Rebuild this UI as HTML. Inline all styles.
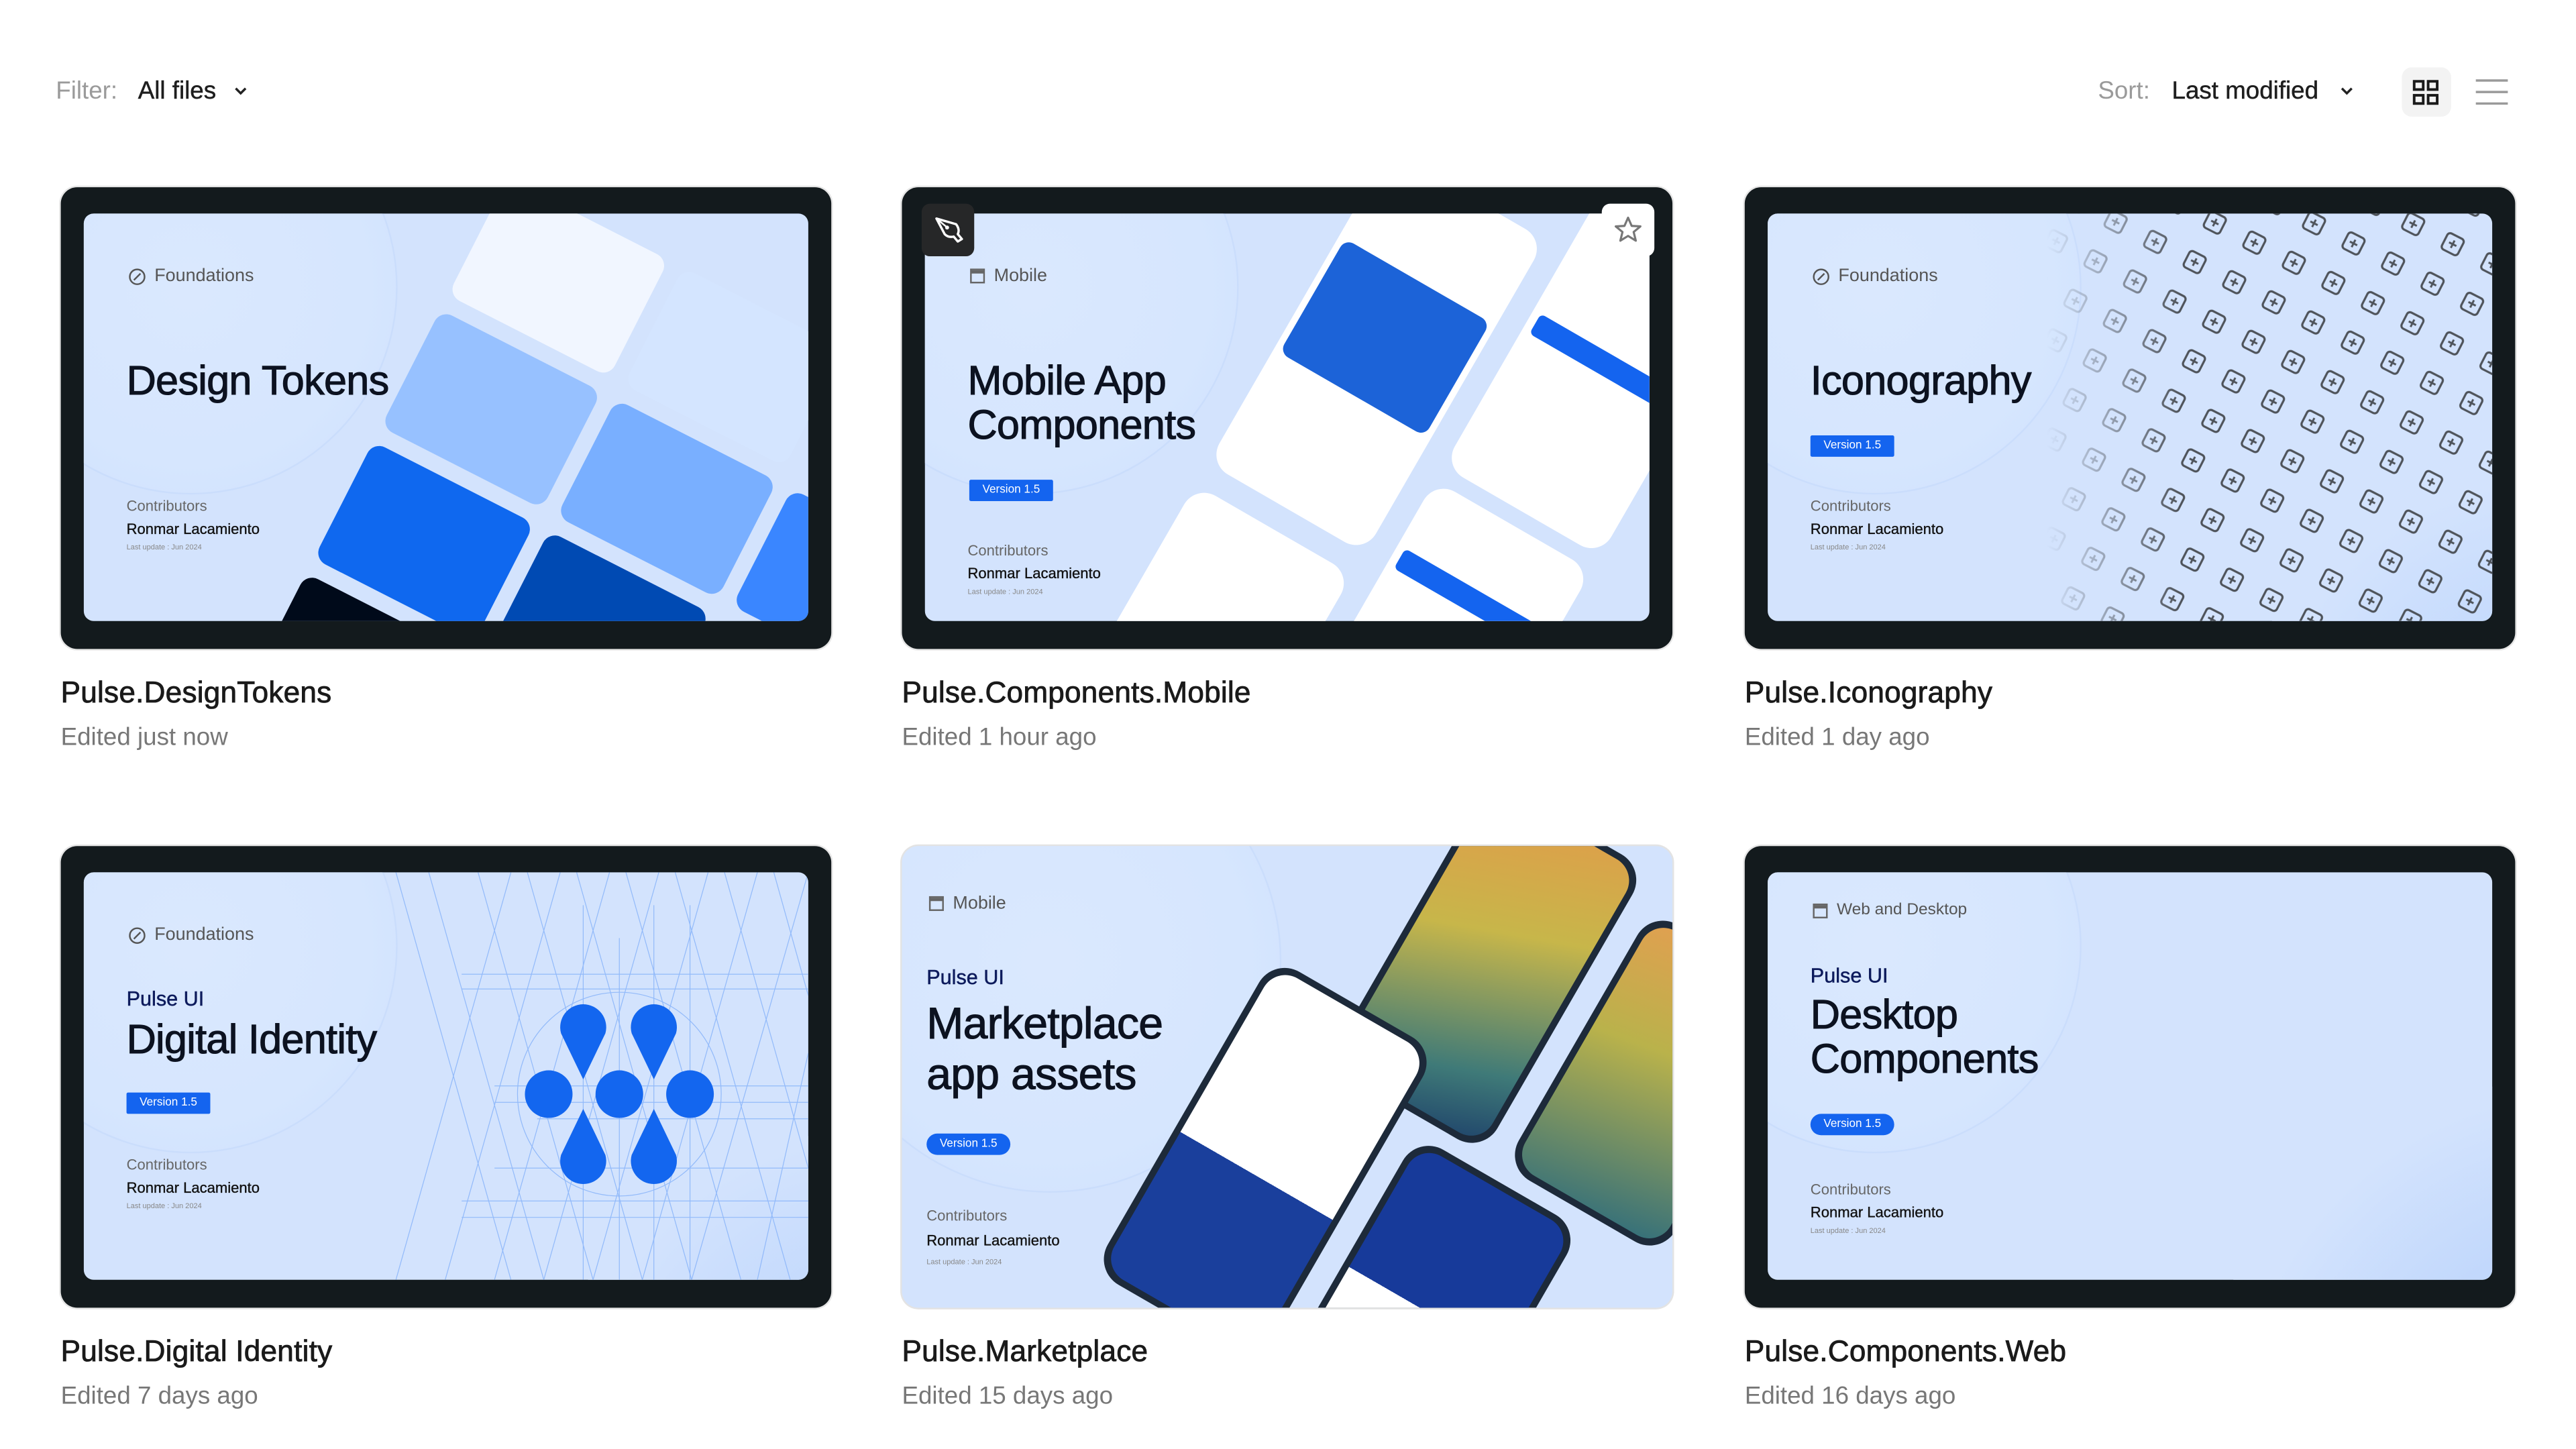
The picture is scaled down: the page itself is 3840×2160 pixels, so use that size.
<!DOCTYPE html>
<html><head><meta charset="utf-8">
<style>
*{margin:0;padding:0;box-sizing:border-box}
html,body{width:3840px;height:2160px;overflow:hidden;background:#fff}
body{font-family:"Liberation Sans",sans-serif}
#w{position:absolute;left:0;top:0;width:1568px;height:881px;overflow:hidden;transform:scale(2.44898);transform-origin:0 0}
.a{position:absolute}
.card{position:absolute;width:469px;height:281px;border-radius:10px;background:#131a1d;overflow:hidden;box-shadow:0 0 0 1px #e6e6e6}
.in{position:absolute;left:14px;top:16px;width:441px;height:248px;border-radius:6px;overflow:hidden;background:#d3e3fd}
.glow{position:absolute;left:-60px;top:-80px;width:250px;height:250px;border-radius:50%;background:radial-gradient(circle,#dae8fe 0%,#d6e6fe 60%,rgba(205,224,253,.9) 100%);box-shadow:0 0 0 1px rgba(190,212,250,.4)}
.lab{position:absolute;font-size:11px;color:#555;display:flex;align-items:center;gap:5px;transform:translateY(-50%)}
.t{position:absolute;font-size:25px;color:#0c1220;line-height:27px;letter-spacing:-.3px;-webkit-text-stroke:.45px #0c1220}
.pu{position:absolute;font-size:12.5px;color:#0d1b5c;transform:translateY(-50%);-webkit-text-stroke:.2px #0d1b5c}
.ver{position:absolute;background:#1464ef;color:#fff;font-size:7px;height:13px;line-height:13px;padding:0 8px;border-radius:1px}
.c1{position:absolute;font-size:9px;color:#666;transform:translateY(-50%)}
.c2{position:absolute;font-size:9px;color:#111;transform:translateY(-50%);-webkit-text-stroke:.15px #111}
.c3{position:absolute;font-size:4.5px;color:#888;transform:translateY(-50%)}
.nm{position:absolute;font-size:18px;color:#1a1a1a;transform:translateY(-50%);letter-spacing:.1px;-webkit-text-stroke:.35px #1a1a1a}
.ed{position:absolute;font-size:15px;color:#777;transform:translateY(-50%)}
.tile{position:absolute;border-radius:8px}
.ph{position:absolute;background:#fff;border-radius:14px}
</style></head><body><div id="w">

<div class="a" style="left:34px;top:47px;font-size:15px;color:#9a9a9a">Filter:</div>
<div class="a" style="left:84px;top:47px;font-size:15px;color:#1e1e1e;-webkit-text-stroke:.2px #1e1e1e">All files</div>
<svg class="a" style="left:142px;top:52px" width="9" height="7" viewBox="0 0 9 7"><path d="M1.5 1.8 4.5 4.8 7.5 1.8" fill="none" stroke="#222" stroke-width="1.4"/></svg>
<div class="a" style="left:1277px;top:47px;font-size:15px;color:#9a9a9a">Sort:</div>
<div class="a" style="left:1322px;top:47px;font-size:15px;color:#1e1e1e;-webkit-text-stroke:.2px #1e1e1e">Last modified</div>
<svg class="a" style="left:1424px;top:52px" width="9" height="7" viewBox="0 0 9 7"><path d="M1.5 1.8 4.5 4.8 7.5 1.8" fill="none" stroke="#222" stroke-width="1.4"/></svg>
<div class="a" style="left:1462px;top:41px;width:30px;height:30px;border-radius:6px;background:#f3f3f3"></div>
<svg class="a" style="left:1468px;top:48px" width="18" height="17" viewBox="0 0 18 17"><g fill="none" stroke="#1a1a1a" stroke-width="1.6"><rect x="1.5" y="1.5" width="5.5" height="5"/><rect x="10" y="1.5" width="5.5" height="5"/><rect x="1.5" y="10" width="5.5" height="5"/><rect x="10" y="10" width="5.5" height="5"/></g></svg>
<svg class="a" style="left:1507px;top:47px" width="20" height="18" viewBox="0 0 20 18"><g stroke="#9a9a9a" stroke-width="1.4"><path d="M0 2h19.5M0 9h19.5M0 16h19.5"/></g></svg>

<!-- CARD 1 -->
<div class="card" style="left:37px;top:114px"><div class="in">
 <div class="glow"></div>
 <div class="a" style="left:200px;top:-40px;width:400px;height:400px;transform:rotate(27deg);transform-origin:0 0">
  <div class="tile" style="left:60px;top:-10px;width:110px;height:80px;background:#f1f6ff"></div>
  <div class="tile" style="left:180px;top:-10px;width:110px;height:80px;background:#d4e5ff"></div>
  <div class="tile" style="left:60px;top:80px;width:110px;height:80px;background:#97c1ff"></div>
  <div class="tile" style="left:180px;top:80px;width:110px;height:80px;background:#79afff"></div>
  <div class="tile" style="left:60px;top:170px;width:110px;height:80px;background:#0f68ef"></div>
  <div class="tile" style="left:180px;top:170px;width:110px;height:80px;background:#004ab3"></div>
  <div class="tile" style="left:60px;top:260px;width:110px;height:80px;background:#000a1a"></div>
  <div class="tile" style="left:180px;top:260px;width:110px;height:80px;background:#0f1e5c"></div>
  <div class="tile" style="left:300px;top:80px;width:110px;height:80px;background:#3a86ff"></div>
 </div>
 <div class="lab" style="left:27px;top:38px"><svg width="11" height="11" viewBox="0 0 11 11"><circle cx="5.5" cy="5.5" r="4.5" fill="none" stroke="#555" stroke-width="1"/><path d="M7.5 3.5 4.8 6.2 3.5 7.5" stroke="#555" stroke-width="1"/></svg>Foundations</div>
 <div class="t" style="left:26px;top:89px">Design Tokens</div>
 <div class="c1" style="left:26px;top:178px">Contributors</div>
 <div class="c2" style="left:26px;top:192px">Ronmar Lacamiento</div>
 <div class="c3" style="left:26px;top:203px">Last update : Jun 2024</div>
</div></div>
<div class="nm" style="left:37px;top:422px">Pulse.DesignTokens</div>
<div class="ed" style="left:37px;top:449px">Edited just now</div>

<!-- CARD 2 -->
<div class="card" style="left:549px;top:114px"><div class="in">
 <div class="glow"></div>
 <div class="a" style="left:260px;top:-40px;width:400px;height:400px;transform:rotate(30deg);transform-origin:0 0">
  <div class="ph" style="left:20px;top:-10px;width:110px;height:220px"></div>
  <div class="a" style="left:24px;top:50px;width:102px;height:80px;background:#1c63d8;border-radius:6px"></div>
  <div class="ph" style="left:145px;top:-60px;width:110px;height:200px"></div>
  <div class="ph" style="left:145px;top:150px;width:110px;height:200px"></div>
  <div class="a" style="left:150px;top:195px;width:100px;height:14px;background:#1464ef;border-radius:3px"></div>
  <div class="a" style="left:150px;top:30px;width:100px;height:14px;background:#1464ef;border-radius:3px"></div>
  <div class="ph" style="left:20px;top:225px;width:110px;height:200px"></div>
 </div>
 <div class="lab" style="left:27px;top:38px"><svg width="10" height="10" viewBox="0 0 10 10"><rect x="1" y="1" width="8" height="8" fill="none" stroke="#666" stroke-width="1"/><path d="M1 2.5h8" stroke="#666" stroke-width="2"/></svg>Mobile</div>
 <div class="t" style="left:26px;top:89px">Mobile App<br>Components</div>
 <div class="ver" style="left:27px;top:162px">Version 1.5</div>
 <div class="c1" style="left:26px;top:205px">Contributors</div>
 <div class="c2" style="left:26px;top:219px">Ronmar Lacamiento</div>
 <div class="c3" style="left:26px;top:230px">Last update : Jun 2024</div>
</div>
 <div class="a" style="left:12px;top:10px;width:32px;height:32px;border-radius:5px;background:#262728"></div>
 <svg class="a" style="left:16px;top:14px" width="24" height="24" viewBox="0 0 24 24"><path d="M5 5 17 8.5c1.5 2 2 4 1 6l2.5 3-2.5 1.5-2.5-3c-2 .5-4 0-5.5-1.5Z" fill="none" stroke="#fff" stroke-width="1.4" stroke-linejoin="round"/><circle cx="11.5" cy="10.5" r="1.2" fill="#fff"/><path d="M5 5 11 10" stroke="#fff" stroke-width="1"/></svg>
 <div class="a" style="left:426px;top:10px;width:32px;height:32px;border-radius:5px;background:#fff"></div>
 <svg class="a" style="left:432px;top:16px" width="20" height="20" viewBox="0 0 20 20"><path d="M10 2.5 12.2 7.5 17.5 7.8 13.4 11.2 14.7 16.5 10 13.6 5.3 16.5 6.6 11.2 2.5 7.8 7.8 7.5Z" fill="none" stroke="#777" stroke-width="1.3" stroke-linejoin="round"/></svg>
</div>
<div class="nm" style="left:549px;top:422px">Pulse.Components.Mobile</div>
<div class="ed" style="left:549px;top:449px">Edited 1 hour ago</div>

<!-- CARD 3 -->
<div class="card" style="left:1062px;top:114px"><div class="in">
 <div class="glow"></div>
 <div class="a" style="left:300px;top:160px;width:260px;height:260px;border-radius:50%;background:radial-gradient(circle at 70% 70%,#b6d1fc,#d3e3fd 70%)"></div>
 <svg class="a" style="left:170px;top:0" width="271" height="248"><defs><pattern id="ic" width="27" height="27" patternUnits="userSpaceOnUse" patternTransform="rotate(27)"><rect x="7" y="7" width="11" height="11" rx="2" fill="none" stroke="#4e535a" stroke-width="1.3"/><path d="M10 12.5h5M12.5 10v5" stroke="#4e535a" stroke-width="1.2"/></pattern>
 <linearGradient id="fd" x1="0" x2="1"><stop offset="0" stop-color="#fff" stop-opacity="0"/><stop offset=".3" stop-color="#fff" stop-opacity="1"/></linearGradient><mask id="mk"><rect width="271" height="248" fill="url(#fd)"/></mask></defs>
 <rect x="0" y="0" width="271" height="248" fill="url(#ic)" mask="url(#mk)"/></svg>
 <div class="lab" style="left:27px;top:38px"><svg width="11" height="11" viewBox="0 0 11 11"><circle cx="5.5" cy="5.5" r="4.5" fill="none" stroke="#555" stroke-width="1"/><path d="M7.5 3.5 4.8 6.2 3.5 7.5" stroke="#555" stroke-width="1"/></svg>Foundations</div>
 <div class="t" style="left:26px;top:89px">Iconography</div>
 <div class="ver" style="left:26px;top:135px">Version 1.5</div>
 <div class="c1" style="left:26px;top:178px">Contributors</div>
 <div class="c2" style="left:26px;top:192px">Ronmar Lacamiento</div>
 <div class="c3" style="left:26px;top:203px">Last update : Jun 2024</div>
</div></div>
<div class="nm" style="left:1062px;top:422px">Pulse.Iconography</div>
<div class="ed" style="left:1062px;top:449px">Edited 1 day ago</div>

<!-- CARD 4 -->
<div class="card" style="left:37px;top:515px"><div class="in">
 <div class="glow"></div>
 <div class="a" style="left:300px;top:160px;width:260px;height:260px;border-radius:50%;background:radial-gradient(circle at 70% 70%,#b3cffc,#d3e3fd 70%)"></div>
 <svg class="a" style="left:0;top:0" width="441" height="248"><g stroke="#8cb6fa" stroke-width=".5" fill="none" opacity=".9">
  <path d="M190 0 260 248M210 0 280 248M240 0 310 248M270 0 340 248M300 0 370 248M330 0 400 248M360 0 430 248M390 0 441 180M420 0 441 75"/>
  <path d="M260 0 190 248M290 0 220 248M320 0 250 248M350 0 280 248M380 0 310 248M410 0 340 248M441 0 370 248M441 110 410 248"/>
  <path d="M230 62H441M230 71H441M250 130H441M250 140H441M250 180H441M230 200H441M230 210H441M276 150H441"/>
  <path d="M326 40V248M347 20V248M304 20V248M369 20V248"/>
  <circle cx="326" cy="135" r="62"/></g>
  <g fill="#1366ef"><circle cx="283" cy="135" r="14.5"/><circle cx="326" cy="135" r="14.5"/><circle cx="369" cy="135" r="14.5"/>
  <path d="M304 126 290.5 98A14 14 0 1 1 317.5 98Z"/><path d="M347 126 333.5 98A14 14 0 1 1 360.5 98Z"/>
  <path d="M304 144 290.5 172A14 14 0 1 0 317.5 172Z"/><path d="M347 144 333.5 172A14 14 0 1 0 360.5 172Z"/></g></svg>
 <div class="lab" style="left:27px;top:38px"><svg width="11" height="11" viewBox="0 0 11 11"><circle cx="5.5" cy="5.5" r="4.5" fill="none" stroke="#555" stroke-width="1"/><path d="M7.5 3.5 4.8 6.2 3.5 7.5" stroke="#555" stroke-width="1"/></svg>Foundations</div>
 <div class="pu" style="left:26px;top:77px">Pulse UI</div>
 <div class="t" style="left:26px;top:89px">Digital Identity</div>
 <div class="ver" style="left:26px;top:134px">Version 1.5</div>
 <div class="c1" style="left:26px;top:178px">Contributors</div>
 <div class="c2" style="left:26px;top:192px">Ronmar Lacamiento</div>
 <div class="c3" style="left:26px;top:203px">Last update : Jun 2024</div>
</div></div>
<div class="nm" style="left:37px;top:823px">Pulse.Digital Identity</div>
<div class="ed" style="left:37px;top:850px">Edited 7 days ago</div>

<!-- CARD 5 -->
<div class="card" style="left:549px;top:515px;background:#d3e3fd;box-shadow:0 0 0 1px #e3e3e3">
 <div class="glow" style="left:-50px;top:-70px;width:280px;height:280px"></div>
 <div class="a" style="left:300px;top:-40px;width:400px;height:400px;transform:rotate(30deg);transform-origin:0 0">
  <div class="a" style="left:50px;top:-30px;width:110px;height:200px;border-radius:18px;background:#1d2a3a;padding:4px"><div style="width:100%;height:100%;border-radius:15px;background:linear-gradient(160deg,#e39a4a,#c7b64a 40%,#3f7a78 80%,#20456b)"></div></div>
  <div class="a" style="left:-10px;top:130px;width:115px;height:220px;border-radius:18px;background:#1d2a3a;padding:4px"><div style="width:100%;height:100%;border-radius:15px;background:linear-gradient(#fff 55%,#1a3f9c 55%)"></div></div>
  <div class="a" style="left:120px;top:180px;width:115px;height:200px;border-radius:18px;background:#1d2a3a;padding:4px"><div style="width:100%;height:100%;border-radius:15px;background:linear-gradient(#173a9a 45%,#fff 45%)"></div></div>
  <div class="a" style="left:175px;top:-10px;width:110px;height:180px;border-radius:18px;background:#1d2a3a;padding:4px"><div style="width:100%;height:100%;border-radius:15px;background:linear-gradient(170deg,#e0a050,#b9b24b 40%,#35707a)"></div></div>
 </div>
 <div class="lab" style="left:16px;top:35px"><svg width="10" height="10" viewBox="0 0 10 10"><rect x="1" y="1" width="8" height="8" fill="none" stroke="#666" stroke-width="1"/><path d="M1 2.5h8" stroke="#666" stroke-width="2"/></svg>Mobile</div>
 <div class="pu" style="left:15px;top:80px">Pulse UI</div>
 <div class="t" style="left:15px;top:93px;font-size:27px;line-height:31px">Marketplace<br>app assets</div>
 <div class="ver" style="left:15px;top:175px;border-radius:7px">Version 1.5</div>
 <div class="c1" style="left:15px;top:225px">Contributors</div>
 <div class="c2" style="left:15px;top:240px">Ronmar Lacamiento</div>
 <div class="c3" style="left:15px;top:253px">Last update : Jun 2024</div>
</div>
<div class="nm" style="left:549px;top:823px">Pulse.Marketplace</div>
<div class="ed" style="left:549px;top:850px">Edited 15 days ago</div>

<!-- CARD 6 -->
<div class="card" style="left:1062px;top:515px"><div class="in">
 <div class="glow"></div>
 <div class="a" style="left:280px;top:130px;width:300px;height:300px;border-radius:50%;background:radial-gradient(circle at 75% 75%,#a9c8fb,#d3e3fd 70%)"></div>
 <div class="lab" style="left:27px;top:23px;font-size:10px"><svg width="10" height="10" viewBox="0 0 10 10"><rect x="1" y="1" width="8" height="8" fill="none" stroke="#666" stroke-width="1"/><path d="M1 2.5h8" stroke="#666" stroke-width="2"/></svg>Web and Desktop</div>
 <div class="pu" style="left:26px;top:63px">Pulse UI</div>
 <div class="t" style="left:26px;top:74px">Desktop<br>Components</div>
 <div class="ver" style="left:26px;top:147px;border-radius:7px">Version 1.5</div>
 <div class="c1" style="left:26px;top:193px">Contributors</div>
 <div class="c2" style="left:26px;top:207px">Ronmar Lacamiento</div>
 <div class="c3" style="left:26px;top:218px">Last update : Jun 2024</div>
</div></div>
<div class="nm" style="left:1062px;top:823px">Pulse.Components.Web</div>
<div class="ed" style="left:1062px;top:850px">Edited 16 days ago</div>

</div></body></html>
